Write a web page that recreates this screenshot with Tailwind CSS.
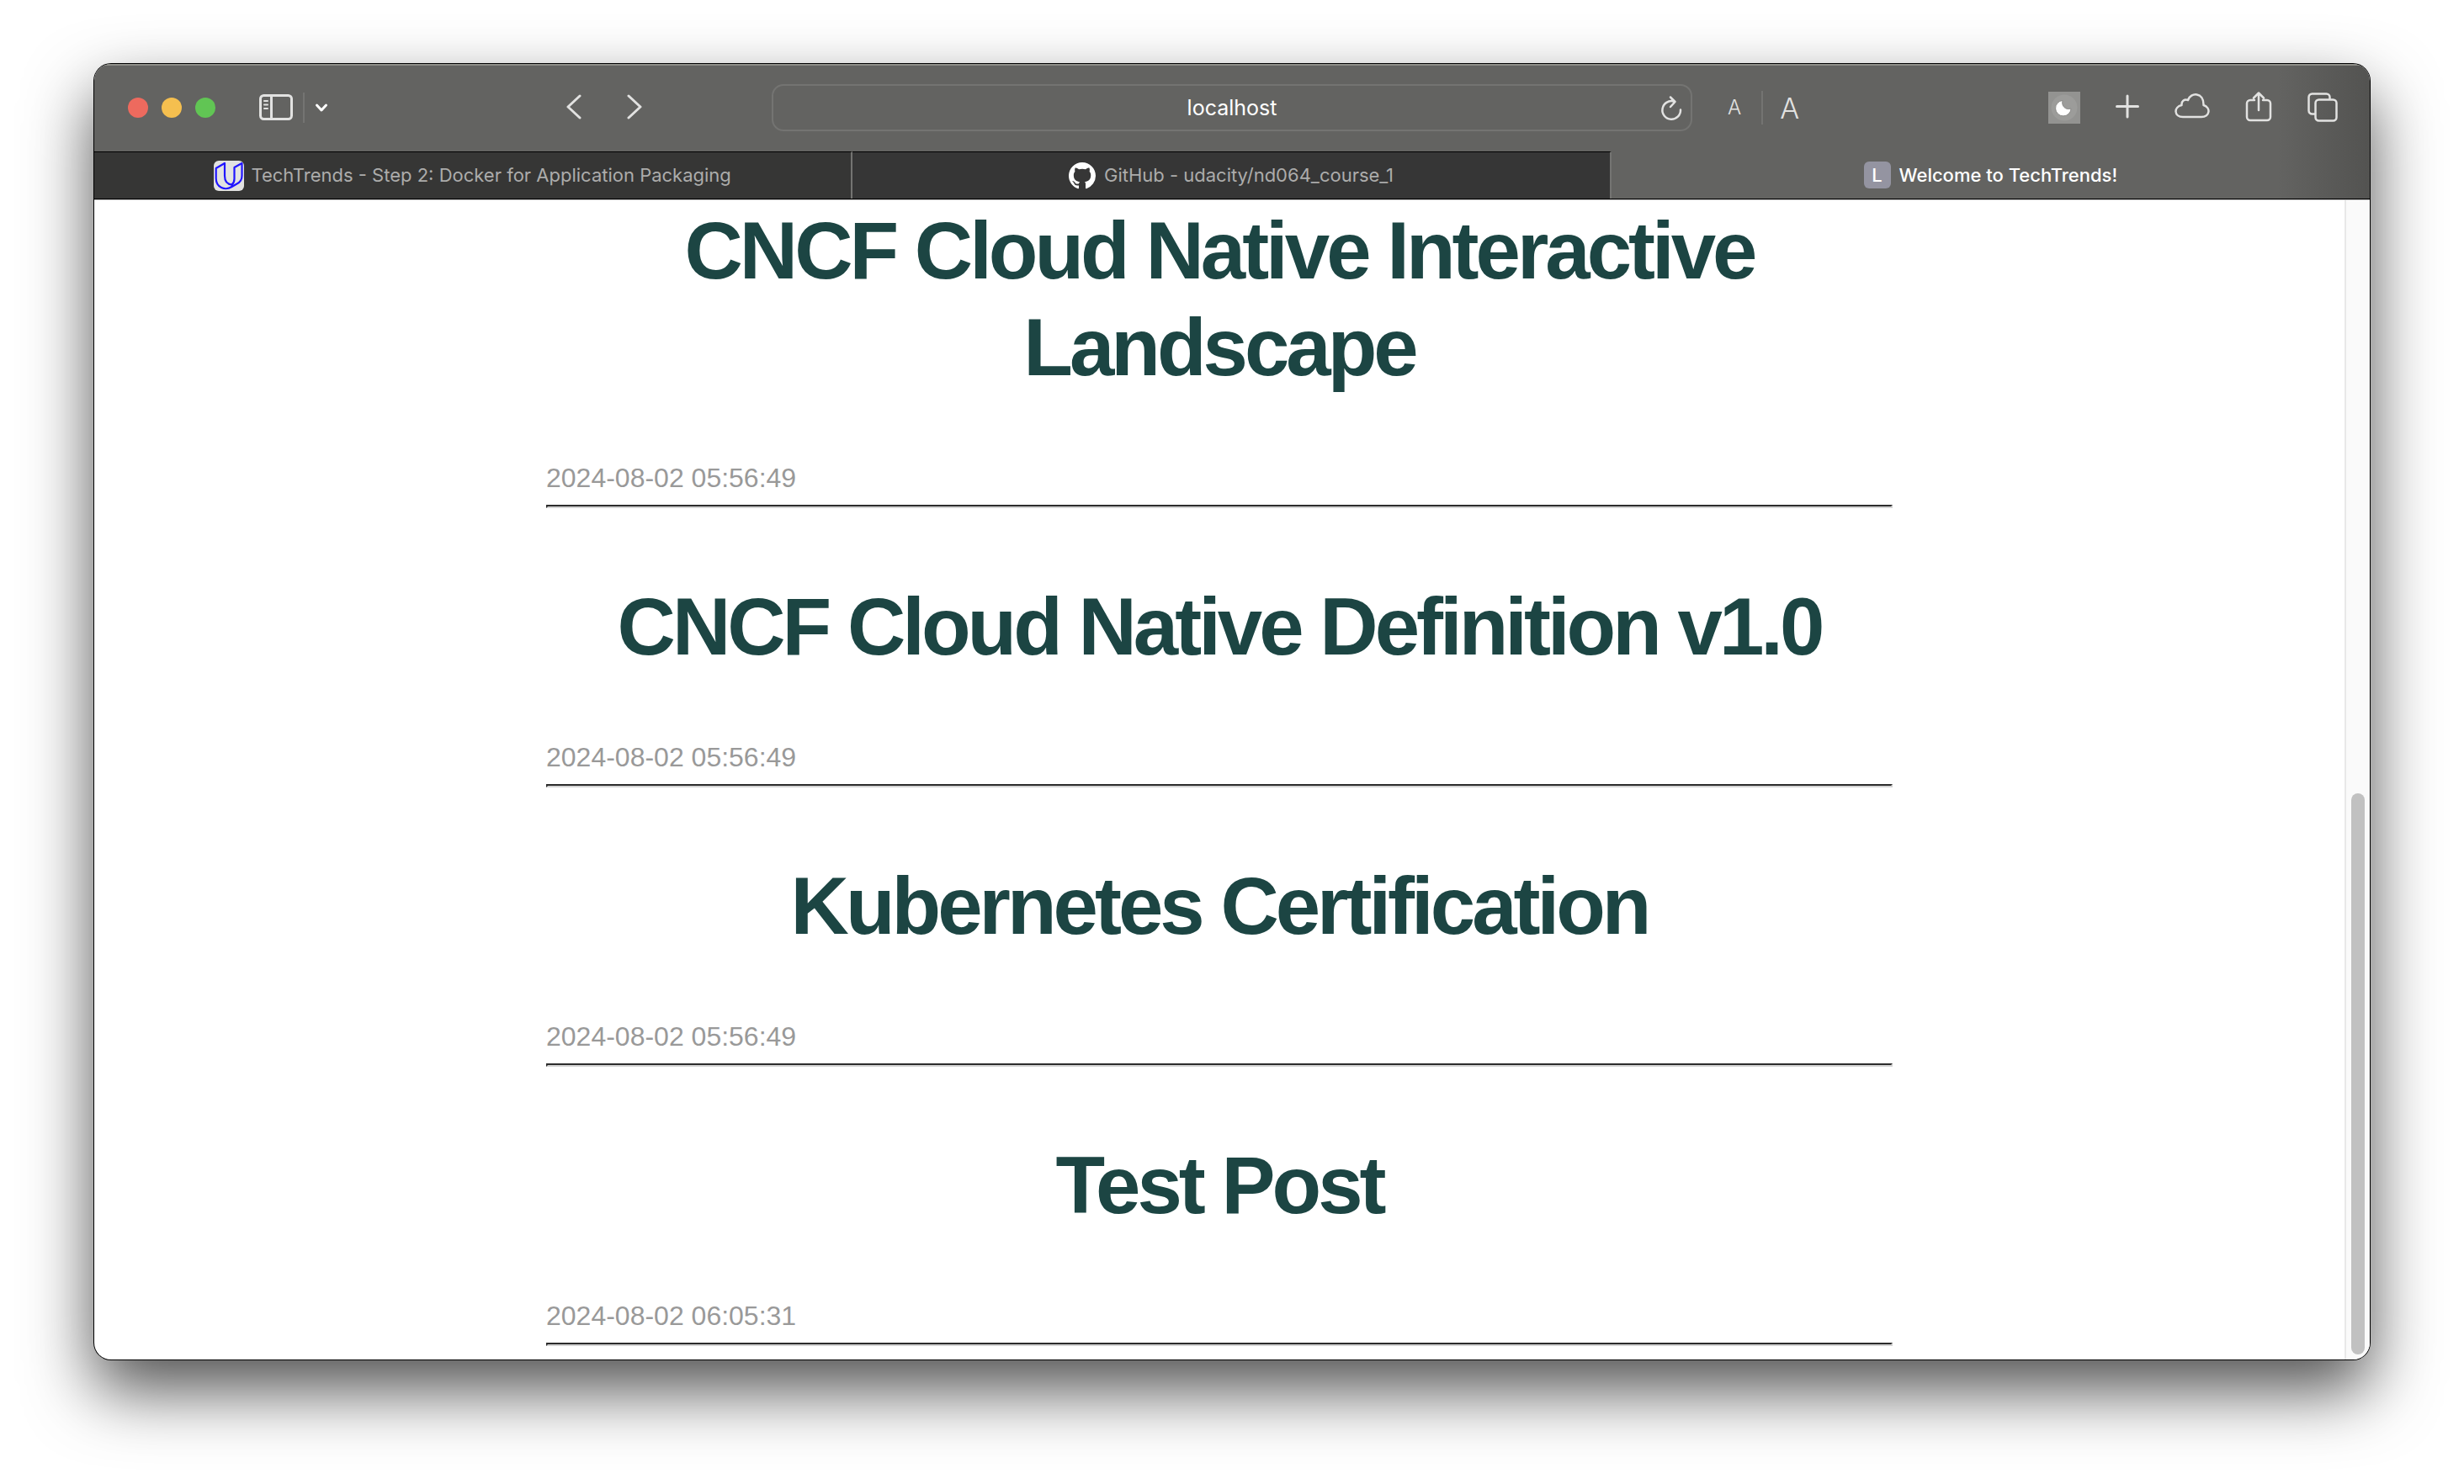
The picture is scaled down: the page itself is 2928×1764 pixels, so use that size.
<!DOCTYPE html>
<html lang="en">
<head>
<meta charset="utf-8">
<title>Welcome to TechTrends!</title>
<script src="https://cdn.jsdelivr.net/npm/@tailwindcss/browser@4"></script>
</head>
<body class="bg-white">
<div class="h-screen px-28 pt-[76px] pb-[148px] font-[Inter,sans-serif]">
  <div class="relative flex h-full flex-col overflow-hidden rounded-[20px] bg-white shadow-[0_0_0_1px_#000,0_36px_80px_rgba(0,0,0,0.69)]">
    <header class="bg-linear-to-r from-[#636361] from-96% to-[#535351] shadow-[inset_0_2px_0_#8e8e88]">
      <div class="grid h-[104px] grid-cols-[1fr_1094px_1fr] items-center">
        <div class="flex items-center">
          <div class="ml-10 flex gap-4">
            <button aria-label="Close" class="size-6 rounded-full bg-[#ed6a5e]"></button>
            <button aria-label="Minimize" class="size-6 rounded-full bg-[#f5bf4f]"></button>
            <button aria-label="Zoom" class="size-6 rounded-full bg-[#61c554]"></button>
          </div>
          <button aria-label="Sidebar" class="ml-[52px]">
            <svg class="block h-8 w-10" viewBox="0 0 40 32" fill="none" stroke="#e2e2e1" stroke-width="3"><rect x="1.500" y="1.500" width="37" height="28" rx="4"/><path d="M14.500 1.500v28"/><path stroke-width="2" stroke-linecap="round" d="M6 8h4M6 12.500h4M6 17h4"/></svg>
          </button>
          <div class="ml-3 h-9 w-0.5 bg-[#747472]"></div>
          <button aria-label="Tab groups" class="ml-3">
            <svg class="block h-4 w-4" viewBox="0 0 16 16" fill="none" stroke="#fff" stroke-width="3" stroke-linecap="round" stroke-linejoin="round"><path d="M2.500 5 8 11l5.500-6"/></svg>
          </button>
          <button aria-label="Back" class="ml-[282px]">
            <svg class="block h-8 w-5" viewBox="0 0 20 32" fill="none" stroke="#e2e2e1" stroke-width="3" stroke-linecap="round" stroke-linejoin="round"><path d="M17 2 3 15l14 13"/></svg>
          </button>
          <button aria-label="Forward" class="ml-[52px]">
            <svg class="block h-8 w-5" viewBox="0 0 20 32" fill="none" stroke="#e2e2e1" stroke-width="3" stroke-linecap="round" stroke-linejoin="round"><path d="m3 2 14 13L3 28"/></svg>
          </button>
        </div>
        <div class="relative h-14">
          <input aria-label="Address" value="localhost" class="size-full rounded-[14px] border-2 border-[#747472] bg-transparent text-center text-[25px] text-white">
          <button aria-label="Reload" class="absolute top-3 right-2.5">
            <svg class="block h-8 w-7" viewBox="0 0 28 32" fill="none" stroke="#e2e2e1" stroke-width="2.500" stroke-linecap="round" stroke-linejoin="round"><path d="M16 8.500A10.800 10.800 0 1 0 24 18.500M12 3.500l5.500 5.500-5.500 6"/></svg>
          </button>
        </div>
        <div class="flex items-center justify-between pr-[38px] pl-[42px] text-[#e2e2e1]">
          <div class="flex items-center">
            <button class="text-[24px] font-light">A</button>
            <div class="mr-5 ml-6 h-10 w-0.5 bg-[#747472]"></div>
            <button class="text-[34px] font-light">A</button>
          </div>
          <div class="flex items-center gap-[42px]">
            <button aria-label="Dark mode">
              <svg class="block h-[38px] w-[38px]" viewBox="0 0 38 38"><path fill="#939391" d="M0 0h38v38H0z"/><circle cx="19" cy="19" r="15.500" fill="#9c9c9a"/><path fill="#fff" stroke="#82827f" stroke-width=".8" d="M17 10.500A9.200 9.200 0 1 0 27 20C21 22.500 15 17 17 10.500z"/></svg>
            </button>
            <button aria-label="New tab">
              <svg class="block h-8 w-7" viewBox="0 0 28 32" stroke="#e2e2e1" stroke-width="3" stroke-linecap="round"><path d="M14 2v25M1.500 14.500h25"/></svg>
            </button>
            <button aria-label="iCloud tabs">
              <svg class="block h-[38px] w-[42px]" viewBox="0 0 42 38" fill="none" stroke="#e2e2e1" stroke-width="2.500" stroke-linejoin="round"><path d="M10 30C-1 30-1 18 8.500 16 8 11 12 8.500 16 10 19 .5 35 0 34.500 16 43.500 19 42 30 32 30z"/></svg>
            </button>
            <button aria-label="Share">
              <svg class="block h-[38px] w-8" viewBox="0 0 32 38" fill="none" stroke="#e2e2e1" stroke-width="2.500" stroke-linecap="round" stroke-linejoin="round"><path d="M11 10H6a4 4 0 0 0-4 4v16a4 4 0 0 0 4 4h20a4 4 0 0 0 4-4V14a4 4 0 0 0-4-4h-5M16 22V1.500M10 7.500l6-6 6 6"/></svg>
            </button>
            <button aria-label="Tab overview">
              <svg class="block h-9 w-9" viewBox="0 0 36 36" fill="none" stroke="#e2e2e1" stroke-width="2.500"><rect x="9.500" y="8.500" width="25" height="25" rx="4"/><path d="M9 25.500H5.500a4 4 0 0 1-4-4v-16a4 4 0 0 1 4-4h17a4 4 0 0 1 4 4v3"/></svg>
            </button>
          </div>
        </div>
      </div>
      <nav class="grid h-[57px] grid-cols-3 border-b border-black text-[22px]">
        <a href="#" class="flex items-center justify-center gap-2 border-t border-r-2 border-t-black border-r-[#747472] bg-[#363635] text-[#acacab]">
          <svg class="h-9 w-9" viewBox="0 0 36 36"><rect width="36" height="36" rx="6" fill="#e2e2e1"/><path fill="none" stroke="#2015ff" stroke-width="2.200" stroke-linejoin="round" d="M2.700 9 13 3v15c0 6 3 10 8.500 10.500 2-1.500 3-4 3-7V8l9-5v15c0 5-2 7.500-6 9.500l-6 3.500c-8 5-18.800 1-18.800-10zM21.500 28.500v2.500"/></svg>
          TechTrends - Step 2: Docker for Application Packaging
        </a>
        <a href="#" class="flex items-center justify-center gap-2.5 border-t border-r-2 border-t-black border-r-[#747472] bg-[#363636] text-[#acacab]">
          <svg class="size-8" viewBox="0 0 16 16" fill="#fff"><path d="M8 0C3.580 0 0 3.580 0 8c0 3.540 2.290 6.530 5.470 7.590.4.070.55-.17.55-.38 0-.19-.01-.82-.01-1.490-2.010.37-2.530-.49-2.690-.94-.09-.23-.48-.94-.82-1.130-.28-.15-.68-.52-.01-.53.63-.01 1.080.58 1.230.82.72 1.210 1.870.87 2.330.66.07-.52.28-.87.51-1.070-1.780-.2-3.640-.89-3.640-3.950 0-.87.31-1.590.82-2.150-.08-.2-.36-1.020.08-2.120 0 0 .67-.21 2.200.82.64-.18 1.320-.27 2-.27s1.360.09 2 .27c1.530-1.040 2.200-.82 2.200-.82.44 1.100.16 1.920.08 2.120.51.56.82 1.270.82 2.150 0 3.070-1.870 3.750-3.650 3.950.29.25.54.73.54 1.480 0 1.070-.01 1.930-.01 2.200 0 .21.15.46.55.38A8.010 8.010 0 0 0 16 8c0-4.420-3.580-8-8-8z"/></svg>
          GitHub - udacity/nd064_course_1
        </a>
        <a href="#" class="flex items-center justify-center gap-2.5 font-medium text-white">
          <span class="flex size-8 items-center justify-center rounded-md bg-[#9494a1]">L</span>
          Welcome to TechTrends!
        </a>
      </nav>
    </header>
    <div class="flex min-h-0 flex-1 border-t border-[#b8b8b8]">
      <main class="min-w-0 flex-1 overflow-hidden font-['Liberation_Sans',sans-serif]">
        <div class="mx-auto max-w-[1600px] pt-0.5">
          <article>
            <h2 class="text-center text-[96px] leading-[115px] font-bold tracking-[-4px] text-[#1c4543]">CNCF Cloud Native Interactive Landscape</h2>
            <p class="mt-[74px] text-[32px] leading-[48px] text-[#999]">2024-08-02 05:56:49</p>
            <hr class="mt-2 border-2 border-t-[#2c2c2c] border-r-[#d3d3d3] border-b-[#d3d3d3] border-l-[#2c2c2c]">
          </article>
          <article class="mt-[83px]">
            <h2 class="text-center text-[96px] leading-[115px] font-bold tracking-[-4px] text-[#1c4543]">CNCF Cloud Native Definition v1.0</h2>
            <p class="mt-[74px] text-[32px] leading-[48px] text-[#999]">2024-08-02 05:56:49</p>
            <hr class="mt-2 border-2 border-t-[#2c2c2c] border-r-[#d3d3d3] border-b-[#d3d3d3] border-l-[#2c2c2c]">
          </article>
          <article class="mt-[83px]">
            <h2 class="text-center text-[96px] leading-[115px] font-bold tracking-[-4px] text-[#1c4543]">Kubernetes Certification</h2>
            <p class="mt-[74px] text-[32px] leading-[48px] text-[#999]">2024-08-02 05:56:49</p>
            <hr class="mt-2 border-2 border-t-[#2c2c2c] border-r-[#d3d3d3] border-b-[#d3d3d3] border-l-[#2c2c2c]">
          </article>
          <article class="mt-[83px]">
            <h2 class="text-center text-[96px] leading-[115px] font-bold tracking-[-4px] text-[#1c4543]">Test Post</h2>
            <p class="mt-[74px] text-[32px] leading-[48px] text-[#999]">2024-08-02 06:05:31</p>
            <hr class="mt-2 border-2 border-t-[#2c2c2c] border-r-[#d3d3d3] border-b-[#d3d3d3] border-l-[#2c2c2c]">
          </article>
        </div>
      </main>
      <div class="flex w-[30px] flex-col items-center justify-end border-l-2 border-[#e8e8e8] bg-[#fafafa] pb-1.5">
        <div class="h-[667px] w-4 rounded-full bg-[#c1c1c1]"></div>
      </div>
    </div>
  </div>
</div>
</body>
</html>
